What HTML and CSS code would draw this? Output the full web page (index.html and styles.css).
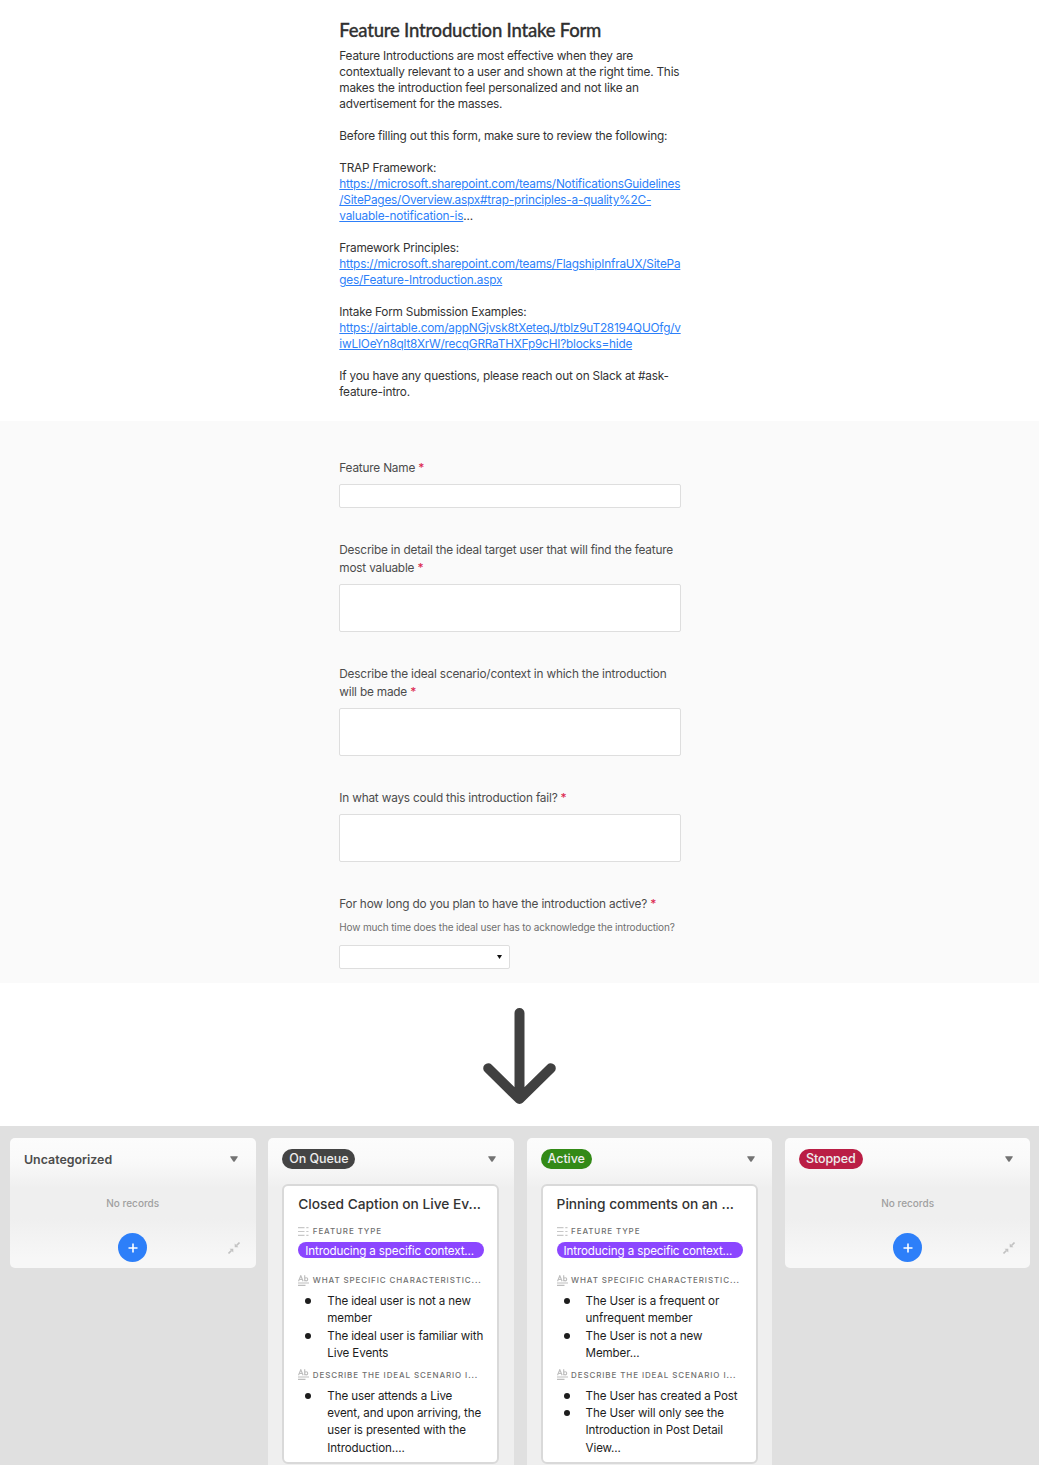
FILE: index.html
```html
<!DOCTYPE html>
<html lang="en">
<head>
<meta charset="utf-8">
<title>Feature Introduction Intake Form</title>
<link rel="stylesheet" href="styles.css">
</head>
<body>
<svg class="defs" width="0" height="0" aria-hidden="true">
  <symbol id="list" viewBox="0 0 11 10"><path d="M0 1.2h6.5M0 5h6.5M0 8.8h6.5M8.3 1.2h2.2M8.3 5h2.2M8.3 8.8h2.2" stroke="#c8c8c8" stroke-width="1.2"/></symbol>
  <symbol id="text" viewBox="0 0 11 11"><path d="M.5 6.2 2.8.7 5.1 6.2M1.3 4.5h3M6.7.3v5.9M6.7 4.3a1.5 1.6 0 1 1 3 0a1.5 1.6 0 1 1-3 0" fill="none" stroke="#bdbdbd" stroke-width="1.15"/><path d="M0 8h11M0 10.3h7.5" stroke="#bdbdbd" stroke-width="1.2"/></symbol>
  <symbol id="shrink" viewBox="0 0 12 12"><path d="M6.7 1.6v3.7h3.7zM5.3 10.4V6.7H1.6z" fill="#c2c2c2"/><path d="M8.5 3.5 11.5.5M3.5 8.5.5 11.5" stroke="#c2c2c2" stroke-width="1.6"/></symbol>
  <symbol id="caret" viewBox="0 0 8 6"><path d="M.6.3h6.8q.6 0 .3.6L4.7 5.5q-.7.7-1.4 0L.3.9Q0 .3.6.3z" fill="#737373"/></symbol>
</svg>
<header class="intro">
  <div class="form-width">
    <h1>Feature Introduction Intake Form</h1>
    <p>Feature Introductions are most effective when they are<br>contextually relevant to a user and shown at the right time. This<br>makes the introduction feel personalized and not like an<br>advertisement for the masses.</p>
    <p>Before filling out this form, make sure to review the following:</p>
    <p>TRAP Framework:<br><a>https://microsoft.sharepoint.com/teams/NotificationsGuidelines<br>/SitePages/Overview.aspx#trap-principles-a-quality%2C-<br>valuable-notification-is</a>...</p>
    <p>Framework Principles:<br><a>https://microsoft.sharepoint.com/teams/FlagshipInfraUX/SitePa<br>ges/Feature-Introduction.aspx</a></p>
    <p>Intake Form Submission Examples:<br><a>https://airtable.com/appNGjvsk8tXeteqJ/tblz9uT28194QUOfg/v<br>iwLIOeYn8qlt8XrW/recqGRRaTHXFp9cHI?blocks=hide</a></p>
    <p>If you have any questions, please reach out on Slack at #ask-<br>feature-intro.</p>
  </div>
</header>
<main class="fields">
  <form class="form-width">
    <div class="field"><label>Feature Name <b>*</b></label><div class="input"></div></div>
    <div class="field"><label>Describe in detail the ideal target user that will find the feature<br>most valuable <b>*</b></label><div class="input area"></div></div>
    <div class="field"><label>Describe the ideal scenario/context in which the introduction<br>will be made <b>*</b></label><div class="input area"></div></div>
    <div class="field"><label>In what ways could this introduction fail? <b>*</b></label><div class="input area"></div></div>
    <div class="field"><label>For how long do you plan to have the introduction active? <b>*</b></label>
      <div class="hint">How much time does the ideal user has to acknowledge the introduction?</div>
      <div class="input select"><svg width="5" height="4" viewBox="0 0 5 4"><path d="M0 0h5L2.5 4z" fill="#111"/></svg></div></div>
  </form>
</main>
<div class="flow-arrow">
  <svg width="77" height="100" viewBox="0 0 77 100"><path d="M38.5 7v86M7.2 62.2 38.5 93 69.8 62.2" fill="none" stroke="#404040" stroke-width="10" stroke-linecap="round" stroke-linejoin="round"/></svg>
</div>
<section class="board">
  <article class="column empty">
    <div class="column-head"><span class="plain">Uncategorized</span><svg class="caret"><use href="#caret"/></svg></div>
    <div class="none">No records</div>
    <div class="actions"><span class="add"><svg width="10" height="10"><path d="M5 .5v9M.5 5h9" stroke="#fff" stroke-width="1.6"/></svg></span><svg class="shrink"><use href="#shrink"/></svg></div>
  </article>
  <article class="column">
    <div class="column-head"><span class="badge dark">On Queue</span><svg class="caret"><use href="#caret"/></svg></div>
    <div class="card">
      <h2>Closed Caption on Live Ev...</h2>
      <div class="meta"><svg><use href="#list"/></svg><span>FEATURE TYPE</span></div>
      <div class="tag">Introducing a specific context...</div>
      <div class="meta what"><svg><use href="#text"/></svg><span>WHAT SPECIFIC CHARACTERISTIC...</span></div>
      <ul><li>The ideal user is not a new<br>member</li><li>The ideal user is familiar with<br>Live Events</li></ul>
      <div class="meta scenario"><svg><use href="#text"/></svg><span>DESCRIBE THE IDEAL SCENARIO I...</span></div>
      <ul><li>The user attends a Live<br>event, and upon arriving, the<br>user is presented with the<br>Introduction....</li></ul>
    </div>
  </article>
  <article class="column">
    <div class="column-head"><span class="badge green">Active</span><svg class="caret"><use href="#caret"/></svg></div>
    <div class="card">
      <h2>Pinning comments on an ...</h2>
      <div class="meta"><svg><use href="#list"/></svg><span>FEATURE TYPE</span></div>
      <div class="tag">Introducing a specific context...</div>
      <div class="meta what"><svg><use href="#text"/></svg><span>WHAT SPECIFIC CHARACTERISTIC...</span></div>
      <ul><li>The User is a frequent or<br>unfrequent member</li><li>The User is not a new<br>Member...</li></ul>
      <div class="meta scenario"><svg><use href="#text"/></svg><span>DESCRIBE THE IDEAL SCENARIO I...</span></div>
      <ul><li>The User has created a Post</li><li>The User will only see the<br>Introduction in Post Detail<br>View...</li></ul>
    </div>
  </article>
  <article class="column empty">
    <div class="column-head"><span class="badge red">Stopped</span><svg class="caret"><use href="#caret"/></svg></div>
    <div class="none">No records</div>
    <div class="actions"><span class="add"><svg width="10" height="10"><path d="M5 .5v9M.5 5h9" stroke="#fff" stroke-width="1.6"/></svg></span><svg class="shrink"><use href="#shrink"/></svg></div>
  </article>
</section>
</body>
</html>
```
FILE: styles.css
```css
* { box-sizing: border-box; }
body { margin: 0; height: 1465px; overflow: hidden; background: #fff; font-family: Inter, "Liberation Sans", sans-serif; color: #333; display: flex; flex-direction: column; white-space: nowrap; }
.defs { position: absolute; }
svg { display: block; flex: none; }
.form-width { width: 342px; margin-left: 339.3px; }
.intro { height: 421px; flex: none; padding-top: 18px; }
h1 { margin: 0 0 5px; font: 500 18.5px/25px Lato, sans-serif; letter-spacing: -0.22px; color: #303030; -webkit-text-stroke: .3px #303030; }
p { margin: 0 0 16px; font-size: 11.8px; line-height: 16px; letter-spacing: -0.2px; }
a { color: #2d7ff9; text-decoration: underline; }
.fields { height: 562px; flex: none; background: #fafafa; padding-top: 37.5px; }
label { display: block; font-size: 11.8px; line-height: 18px; letter-spacing: -0.19px; color: #4c4c4c; }
label b { font-weight: 500; color: #dc2850; }
.input { height: 24px; margin: 7.5px 0 32.5px; background: #fff; border: 1px solid #dedede; border-radius: 2px; }
.area { height: 48px; }
.hint { margin-top: 7.5px; font-size: 10px; line-height: 14px; letter-spacing: -0.155px; color: #707070; }
.select { width: 171px; margin-top: 11px; display: flex; align-items: center; justify-content: flex-end; padding-right: 7px; }
.flow-arrow { height: 143px; flex: none; display: flex; justify-content: center; padding-top: 23px; }
.board { flex: 1; min-height: 0; background: #e0e0e0; padding: 12px 9px 0 10px; display: grid; grid-template-columns: repeat(4, 245.5px); column-gap: 12.8px; align-items: start; }
.column { height: 340px; padding: 0 14px; border-radius: 5px; background: linear-gradient(#fcfcfc 0, #f9f9f9 24px, #efefef 50px); }
.empty { height: 130px; background: linear-gradient(#fcfcfc 0, #f9f9f9 24px, #efefef 50px, #efefef 80px, #f7f7f7 120px); }
.column-head { height: 46px; padding: 0 3.5px 3.2px 0; display: flex; align-items: center; justify-content: space-between; }
.plain { font-size: 12.4px; font-weight: 600; color: #4c4c4c; }
.caret { width: 8px; height: 6px; }
.badge { height: 20px; padding: 0 7px; border-radius: 10px; font-size: 12.5px; line-height: 20px; font-weight: 500; letter-spacing: -0.08px; color: #eee; }
.dark { background: #444; }
.green { background: #338a17; }
.red { background: #ba1e45; }
.none { text-align: center; padding-top: 12px; font-size: 10px; line-height: 14px; font-weight: 500; color: #a0a0a0; }
.actions { margin-top: 23px; display: grid; grid-template-columns: 1fr 29px 1fr; align-items: center; }
.add { grid-column: 2; width: 29px; height: 29px; border-radius: 50%; background: #2d7ff9; display: grid; place-content: center; }
.shrink { width: 12px; height: 12px; justify-self: end; margin-right: 1.5px; }
.card { height: 280px; width: 217px; background: #fff; border: 2px solid #d9d9d9; border-radius: 6px; padding: 8px 0 0 14px; }
h2 { margin: 0; font-size: 13.75px; line-height: 20px; font-weight: 500; letter-spacing: -0.02px; color: #333; }
.meta { margin-top: 11px; height: 12px; display: flex; align-items: center; gap: 3.5px; font-size: 8px; line-height: 12px; letter-spacing: .88px; font-weight: 500; color: #707070; }
.meta svg { width: 11px; height: 11px; }
.tag { width: 186px; height: 16px; margin-top: 5px; padding-left: 7px; border-radius: 8px; background: #8b46ff; color: #fff; font-size: 11.6px; line-height: 18px; letter-spacing: -0.12px; }
.what { margin-top: 16px; }
.scenario { margin-top: 6px; }
ul { margin: 7px 0 0; padding: 0 0 0 29px; list-style: none; font-size: 11.6px; line-height: 17.4px; letter-spacing: -0.12px; color: #1d1d1d; }
li::before { content: ""; float: left; width: 6px; height: 6px; border-radius: 50%; background: #1d1d1d; margin: 5px 0 0 -22px; }
```
